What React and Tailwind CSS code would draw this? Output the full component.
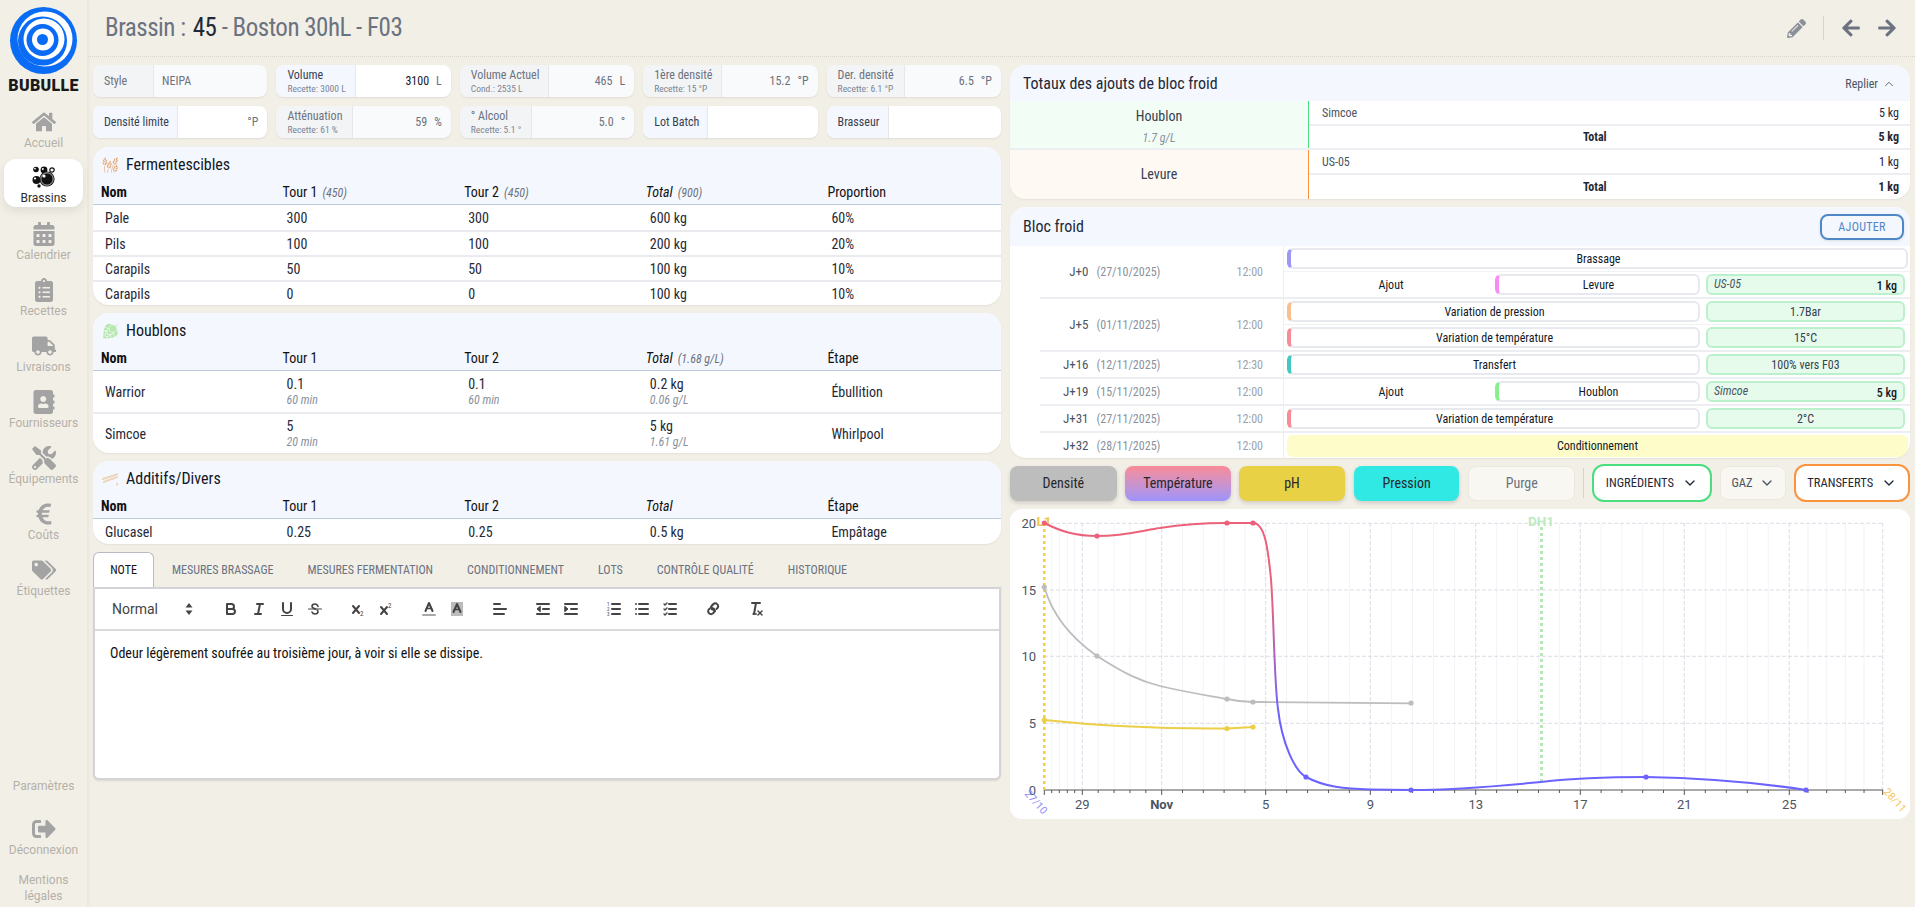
import React from 'react';
import { FaHome, FaCalendarAlt, FaClipboardList, FaTruck, FaAddressBook, FaTools, FaEuroSign, FaTags, FaSignOutAlt, FaPencilAlt, FaArrowLeft, FaArrowRight } from 'react-icons/fa';
import { GiWheat, GiHops } from 'react-icons/gi';
import { ChevronUp, ChevronDown } from 'lucide-react';

const Logo = () => (
  <svg width="70" height="70" viewBox="0 0 70 70">
    <circle cx="34.5" cy="34.5" r="33.5" fill="#0a6cf5" />
    <circle cx="36" cy="33" r="27.5" fill="#fff" />
    <circle cx="33.5" cy="35" r="24.5" fill="#0a6cf5" />
    <circle cx="35" cy="33" r="20.5" fill="#fff" />
    <circle cx="33.5" cy="34" r="16" fill="#0a6cf5" />
    <circle cx="34" cy="33.5" r="11" fill="#fff" />
    <circle cx="33.5" cy="33.5" r="5.5" fill="#0a6cf5" />
  </svg>
);

const BubblesIcon = () => (
  <svg width="24" height="22" viewBox="0 0 24 22">
    <circle cx="4" cy="3.5" r="2.8" fill="#111" />
    <circle cx="3" cy="2.6" r="0.9" fill="#fff" />
    <circle cx="12" cy="4" r="3.4" fill="#111" />
    <circle cx="10.8" cy="3" r="1" fill="#fff" />
    <circle cx="15" cy="13" r="7.6" fill="#111" />
    <circle cx="15" cy="13" r="6.2" fill="none" stroke="#fff" strokeWidth="0.7" />
    <circle cx="12" cy="10" r="1.6" fill="#fff" />
    <circle cx="4.5" cy="14" r="4" fill="#111" />
    <circle cx="3" cy="12.5" r="1.1" fill="#fff" />
    <circle cx="7" cy="20" r="1.7" fill="#111" />
    <circle cx="20" cy="4" r="2.2" fill="none" stroke="#111" strokeWidth="1.2" />
  </svg>
);

const SpoonIcon = () => (
  <svg width="18" height="14" viewBox="0 0 18 14" fill="none" stroke="#ecd4b4" strokeWidth="2" strokeLinecap="round">
    <path d="M1 7 L16 2" />
    <path d="M2 10 L16 5" />
    <path d="M16 12 L16 13" />
  </svg>
);

const navItems = [
  { label: 'Calendrier', Icon: FaCalendarAlt },
  { label: 'Recettes', Icon: FaClipboardList },
  { label: 'Livraisons', Icon: FaTruck },
  { label: 'Fournisseurs', Icon: FaAddressBook },
  { label: 'Équipements', Icon: FaTools },
  { label: 'Coûts', Icon: FaEuroSign },
  { label: 'Étiquettes', Icon: FaTags },
];

const NavItem = ({ label, Icon }) => (
  <div className="h-[56px] pb-[2px] flex flex-col items-center justify-center">
    <Icon className="text-[#a3a3a3] text-[24px]" />
    <span className="mt-[1px] text-[12px] leading-[16px] text-[#b5b1a9]">{label}</span>
  </div>
);

const Sidebar = () => (
  <aside className="w-[88px] shrink-0 h-screen flex flex-col border-r border-[#ebe8df] bg-[#f2efe7] [font-family:Roboto,sans-serif] [font-stretch:100%] shadow-[1px_0_3px_rgba(0,0,0,0.04)]">
    <div className="h-[103px] pt-[6px] flex flex-col items-center">
      <Logo />
      <span className="mt-[1px] text-[16px] leading-[18px] font-black tracking-[0.3px] text-[#1a1a1a]">BUBULLE</span>
    </div>
    <NavItem label="Accueil" Icon={FaHome} />
    <div className="mx-[4px] h-[48px] pt-[6px] rounded-xl bg-white shadow-[0_4px_10px_rgba(0,0,0,0.08)] flex flex-col items-center justify-center">
      <BubblesIcon />
      <span className="mt-[2px] text-[12px] leading-[16px] text-[#2b2b2b]">Brassins</span>
    </div>
    <div className="h-[8px]" />
    {navItems.map((item) => (
      <NavItem key={item.label} {...item} />
    ))}
    <div className="mt-auto flex flex-col items-center pb-[3px] text-[12px] leading-[16px] text-[#b5b1a9]">
      <span>Paramètres</span>
      <FaSignOutAlt className="mt-[23px] text-[#a3a3a3] text-[24px]" />
      <span className="mt-[1px]">Déconnexion</span>
      <span className="mt-[14px]">Mentions</span>
      <span>légales</span>
    </div>
  </aside>
);

const Field = ({ label, sub, value, unit, labelW, active }) => (
  <div className={`h-[32px] flex rounded-lg overflow-hidden shadow-[0_1px_2px_rgba(0,0,0,0.08)] ${active ? 'bg-white' : 'bg-[#f9fafb]'}`}>
    <div className={`${labelW} shrink-0 flex flex-col justify-center pl-[11px] border-r border-[#e5e7eb] ${active ? 'bg-[#f4f7fe] text-[#374151]' : 'bg-[#f3f4f6] text-[#6b7280]'}`}>
      <span className="text-[12px] leading-[15px]">{label}</span>
      {sub && <span className="text-[9.5px] leading-[12px] text-[#7b8494]">{sub}</span>}
    </div>
    <div className={`flex-1 flex items-center text-[12px] ${unit !== undefined ? 'justify-end pr-[9px]' : 'pl-[8px]'} ${active ? 'text-[#111827]' : 'text-[#6b7280]'}`}>
      <span>{value}</span>
      {unit && <span className="ml-[7px] text-[#6b7280]">{unit}</span>}
    </div>
  </div>
);

const fields = [
  { label: 'Style', value: 'NEIPA', labelW: 'w-[61px]' },
  { label: 'Volume', sub: 'Recette: 3000 L', value: '3100', unit: 'L', labelW: 'w-[80px]', active: true },
  { label: 'Volume Actuel', sub: 'Cond.: 2535 L', value: '465', unit: 'L', labelW: 'w-[89px]' },
  { label: '1ère densité', sub: 'Recette: 15 °P', value: '15.2', unit: '°P', labelW: 'w-[79px]' },
  { label: 'Der. densité', sub: 'Recette: 6.1 °P', value: '6.5', unit: '°P', labelW: 'w-[78px]' },
  { label: 'Densité limite', value: '', unit: '°P', labelW: 'w-[85px]', active: true },
  { label: 'Atténuation', sub: 'Recette: 61 %', value: '59', unit: '%', labelW: 'w-[77px]' },
  { label: '° Alcool', sub: 'Recette: 5.1 °', value: '5.0', unit: '°', labelW: 'w-[72px]' },
  { label: 'Lot Batch', value: '', labelW: 'w-[65px]', active: true },
  { label: 'Brasseur', value: '', labelW: 'w-[62px]', active: true },
];

const Head = ({ children, note, italic, first }) => (
  <div className={`pl-[8px] ${first ? 'font-bold' : ''} ${italic ? 'italic' : ''}`}>
    {children}
    {note && <span className="ml-[5px] text-[12px] italic text-[#6b7280]">{note}</span>}
  </div>
);

const IngredientCard = ({ icon, title, heads, rows, rowH }) => (
  <section className="rounded-2xl overflow-hidden bg-white shadow-[0_1px_2px_rgba(0,0,0,0.06)]">
    <div className="bg-[#f4f7fe] border-b border-[#bccbdc]">
      <div className="h-[33px] pt-[2px] flex items-center pl-[9px] gap-[7px] text-[16px] text-[#111827]">
        <span className="w-[17px] flex justify-center">{icon}</span>
        {title}
      </div>
      <div className="h-[24px] grid grid-cols-5 items-center text-[14px] text-[#111]">
        {heads.map((h, i) => (
          <Head key={i} first={i === 0} note={h.note} italic={h.italic}>{h.text}</Head>
        ))}
      </div>
    </div>
    {rows.map((row, i) => (
      <div key={i} className={`${rowH} pt-[1px] grid grid-cols-5 items-center text-[14px] text-[#1f2937] ${i > 0 ? 'border-t-2 border-[#e9ebef]' : ''}`}>
        {row.map((cell, j) => (
          <div key={j} className="pl-[12px]">
            {typeof cell === 'string' ? cell : (
              <div className="leading-[16px]">
                <div>{cell.v}</div>
                <div className="text-[12px] italic text-[#8a919c]">{cell.s}</div>
              </div>
            )}
          </div>
        ))}
      </div>
    ))}
  </section>
);

const Ico = ({ children }) => (
  <span className="w-[28px] h-[24px] flex items-center justify-center">
    <svg width="18" height="18" viewBox="0 0 18 18" fill="none" stroke="#444" strokeWidth="2" strokeLinecap="round" strokeLinejoin="round">
      {children}
    </svg>
  </span>
);

const Toolbar = () => (
  <div className="h-[42px] flex items-center pl-[9px] border-b-2 border-[#d9d9dc]">
    <div className="w-[98px] mr-[15px] flex items-center justify-between pl-[8px] pr-[8px] text-[14px] text-[#444] [font-stretch:100%]">
      <span>Normal</span>
      <svg width="10" height="16" viewBox="0 0 10 16" fill="#444"><path d="M5 2 L8.5 6.5 H1.5 Z" /><path d="M5 14 L8.5 9.5 H1.5 Z" /></svg>
    </div>
    <div className="flex mr-[15px]">
      <Ico><path d="M5 4h4.5a2.5 2.5 0 0 1 0 5H5z" /><path d="M5 9h5.5a2.5 2.5 0 0 1 0 5H5z" /></Ico>
      <Ico><line x1="7" x2="13" y1="4" y2="4" /><line x1="5" x2="11" y1="14" y2="14" /><line x1="8" x2="10" y1="14" y2="4" /></Ico>
      <Ico><path d="M5 3v6a4 4 0 0 0 8 0V3" /><line x1="3.5" x2="14.5" y1="15.5" y2="15.5" strokeWidth="1" /></Ico>
      <Ico><line x1="15.5" x2="2.5" y1="9" y2="9" strokeWidth="1" /><path d="M12 6.4C11.6 5 10.4 4 9 4 7.2 4 6 5 6 6.3 6 8 8 8.5 9.5 9" strokeWidth="1.6" /><path d="M6 12c.4 1.3 1.6 2 3 2 1.8 0 3-.9 3-2.2 0-.8-.3-1.3-.9-1.8" strokeWidth="1.6" /></Ico>
    </div>
    <div className="flex mr-[15px]">
      <Ico><path d="M4 6l6 7M10 6l-6 7" /><text x="11" y="16" fontSize="7" fill="#444" stroke="none">2</text></Ico>
      <Ico><path d="M4 7l6 7M10 7l-6 7" /><text x="11" y="8" fontSize="7" fill="#444" stroke="none">2</text></Ico>
    </div>
    <div className="flex mr-[15px]">
      <Ico><path d="M5.5 11 9 3l3.5 8" /><line x1="6.5" x2="11.5" y1="8.5" y2="8.5" strokeWidth="1.5" /><line x1="3" x2="15" y1="15" y2="15" stroke="#a8a8a8" strokeWidth="2" /></Ico>
      <Ico><rect x="3" y="2" width="12" height="14" fill="#bbb" stroke="none" /><path d="M5.5 12 9 4l3.5 8" /><line x1="6.5" x2="11.5" y1="9.5" y2="9.5" strokeWidth="1.5" /></Ico>
    </div>
    <div className="flex mr-[15px]">
      <Ico><line x1="3" x2="15" y1="9" y2="9" /><line x1="3" x2="13" y1="14" y2="14" /><line x1="3" x2="9" y1="4" y2="4" /></Ico>
    </div>
    <div className="flex mr-[15px]">
      <Ico><line x1="3" x2="15" y1="14" y2="14" /><line x1="3" x2="15" y1="4" y2="4" /><line x1="9" x2="15" y1="9" y2="9" /><path d="M6 6.5 3 9l3 2.5z" fill="#444" strokeWidth="1" /></Ico>
      <Ico><line x1="3" x2="15" y1="14" y2="14" /><line x1="3" x2="15" y1="4" y2="4" /><line x1="9" x2="15" y1="9" y2="9" /><path d="M3 6.5 6 9l-3 2.5z" fill="#444" strokeWidth="1" /></Ico>
    </div>
    <div className="flex mr-[15px]">
      <Ico><line x1="7" x2="15" y1="4" y2="4" /><line x1="7" x2="15" y1="9" y2="9" /><line x1="7" x2="15" y1="14" y2="14" /><text x="2" y="6" fontSize="5" fill="#444" stroke="none">1</text><text x="2" y="11" fontSize="5" fill="#444" stroke="none">2</text><text x="2" y="16" fontSize="5" fill="#444" stroke="none">3</text></Ico>
      <Ico><line x1="6" x2="15" y1="4" y2="4" /><line x1="6" x2="15" y1="9" y2="9" /><line x1="6" x2="15" y1="14" y2="14" /><line x1="3" x2="3" y1="4" y2="4" /><line x1="3" x2="3" y1="9" y2="9" /><line x1="3" x2="3" y1="14" y2="14" /></Ico>
      <Ico><line x1="8" x2="15" y1="4" y2="4" /><line x1="8" x2="15" y1="9" y2="9" /><line x1="8" x2="15" y1="14" y2="14" /><path d="M3 4l1 1 2-2M3 14l1 1 2-2" strokeWidth="1.4" /><path d="M3 9l1 1 2-2" strokeWidth="1.4" /></Ico>
    </div>
    <div className="flex mr-[15px]">
      <Ico><path d="M7 7 11 11" /><path d="M8.9 4.6 8 5.5a2.6 2.6 0 0 0 0 3.7l.3.3" /><path d="M9.5 8.5l.3.3a2.6 2.6 0 0 1 0 3.7l-.9.9a2.6 2.6 0 0 1-3.7 0l-.3-.3a2.6 2.6 0 0 1 0-3.7l.9-.9" /><path d="M8.5 5l.9-.9a2.6 2.6 0 0 1 3.7 0l.3.3a2.6 2.6 0 0 1 0 3.7l-.9.9" /></Ico>
    </div>
    <div className="flex">
      <Ico><line x1="5" x2="13" y1="3" y2="3" /><line x1="6" x2="9.4" y1="14" y2="14" strokeWidth="1.5" /><line x1="9" x2="7" y1="3" y2="14" /><line x1="11" x2="15" y1="11" y2="15" strokeWidth="1.5" /><line x1="15" x2="11" y1="11" y2="15" strokeWidth="1.5" /></Ico>
    </div>
  </div>
);

const tabs = ['MESURES BRASSAGE', 'MESURES FERMENTATION', 'CONDITIONNEMENT', 'LOTS', 'CONTRÔLE QUALITÉ', 'HISTORIQUE'];

const NotePanel = () => (
  <div>
    <div className="flex items-end h-[35px]">
      <div className="w-[61px] h-[35px] mr-[1px] flex items-center justify-center rounded-t-md border border-b-0 border-[#b8bcc2] bg-white text-[12px] text-[#111]">NOTE</div>
      {tabs.map((t) => (
        <div key={t} className="h-[35px] px-[17px] flex items-center text-[12px] text-[#6b7280]">{t}</div>
      ))}
    </div>
    <div className="h-[193px] bg-white border-2 border-[#d4d4d8] rounded-b-md shadow-[0_1px_2px_rgba(0,0,0,0.1)]">
      <Toolbar />
      <p className="pt-[12px] pl-[15px] text-[14px] leading-[20px] text-[#111]">Odeur légèrement soufrée au troisième jour, à voir si elle se dissipe.</p>
    </div>
  </div>
);

const TotalRows = ({ name, qty, tall }) => (
  <div className="flex-1">
    <div className="h-[25px] flex items-center justify-between pl-[13px] pr-[11px] text-[12px] text-[#4b5563] border-b-2 border-[#eceef2]">
      <span>{name}</span>
      <span className="text-[#1f2937]">{qty}</span>
    </div>
    <div className={`${tall} grid grid-cols-[1fr_auto] items-center pr-[11px] text-[12px] font-bold text-[#1f2937]`}>
      <span className="text-center pl-[2px]">Total</span>
      <span>{qty}</span>
    </div>
  </div>
);

const TotalsCard = () => (
  <section className="rounded-2xl overflow-hidden bg-white shadow-[0_1px_2px_rgba(0,0,0,0.06)]">
    <div className="h-[36px] pt-[2px] flex items-center justify-between pl-[13px] pr-[14px] bg-[#f4f7fe]">
      <span className="text-[16px] text-[#1f2937]">Totaux des ajouts de bloc froid</span>
      <span className="flex items-center gap-[4px] text-[12px] text-[#4b5563]">Replier <ChevronUp size={14} strokeWidth={1.5} /></span>
    </div>
    <div className="flex border-b-2 border-[#eceef2]">
      <div className="w-[299px] h-[47px] pt-[3px] bg-[#f2fdf5] border-r border-[#4ade80] flex flex-col items-center justify-center">
        <span className="text-[14px] text-[#374151]">Houblon</span>
        <span className="mt-[2px] text-[12px] italic text-[#8a919c]">1.7 g/L</span>
      </div>
      <TotalRows name="Simcoe" qty="5 kg" tall="h-[22px]" />
    </div>
    <div className="flex">
      <div className="w-[299px] h-[49px] bg-[#fff9f3] border-r border-[#fb923c] flex items-center justify-center text-[14px] text-[#374151]">Levure</div>
      <TotalRows name="US-05" qty="1 kg" tall="h-[24px]" />
    </div>
  </section>
);

const Bubble = ({ color, children, className }) => (
  <div className={`h-[21px] flex items-center justify-center rounded-md border-2 border-[#e8e9ee] border-l-4 bg-white text-[12px] text-[#111827] ${color} ${className}`}>{children}</div>
);

const GreenBox = ({ children, name, qty }) => (
  <div className="w-[199px] h-[21px] mr-[3px] shrink-0 flex items-center justify-center relative rounded-md border-2 border-[#bbf0cc] bg-[#e6fbec] text-[12px] text-[#374151]">
    {name ? (
      <>
        <span className="absolute left-[6px] top-[-1px] italic text-[#4b5563]">{name}</span>
        <span className="absolute right-[6px] bottom-[-2px] font-medium text-[#111827]">{qty}</span>
      </>
    ) : children}
  </div>
);

const EventRow = ({ ev }) => (
  <div className="h-[25px] flex items-center gap-[6px] pl-[3px] pr-[2px]">
    {ev.yellow ? (
      <div className="flex-1 h-[22px] flex items-center justify-center rounded-md bg-[#fefcc8] text-[12px] text-[#111827]">{ev.text}</div>
    ) : ev.full ? (
      <Bubble color={ev.color} className="flex-1">{ev.text}</Bubble>
    ) : ev.prefix ? (
      <>
        <span className="w-[208px] text-center text-[12px] text-[#111827]">{ev.prefix}</span>
        <Bubble color={ev.color} className="flex-1 -ml-[6px]">{ev.text}</Bubble>
        <GreenBox name={ev.name} qty={ev.qty} />
      </>
    ) : (
      <>
        <Bubble color={ev.color} className="flex-1">{ev.text}</Bubble>
        <GreenBox>{ev.value}</GreenBox>
      </>
    )}
  </div>
);

const schedule = [
  { day: 'J+0', date: '(27/10/2025)', time: '12:00', events: [
    { full: true, text: 'Brassage', color: 'border-l-[#9d97f8]' },
    { prefix: 'Ajout', text: 'Levure', color: 'border-l-[#f98bf5]', name: 'US-05', qty: '1 kg' },
  ] },
  { day: 'J+5', date: '(01/11/2025)', time: '12:00', events: [
    { text: 'Variation de pression', color: 'border-l-[#f9c08e]', value: '1.7Bar' },
    { text: 'Variation de température', color: 'border-l-[#f78b96]', value: '15°C' },
  ] },
  { day: 'J+16', date: '(12/11/2025)', time: '12:30', events: [
    { text: 'Transfert', color: 'border-l-[#3fc9c2]', value: '100% vers F03' },
  ] },
  { day: 'J+19', date: '(15/11/2025)', time: '12:00', events: [
    { prefix: 'Ajout', text: 'Houblon', color: 'border-l-[#86f08f]', name: 'Simcoe', qty: '5 kg' },
  ] },
  { day: 'J+31', date: '(27/11/2025)', time: '12:00', events: [
    { text: 'Variation de température', color: 'border-l-[#f78b96]', value: '2°C' },
  ] },
  { day: 'J+32', date: '(28/11/2025)', time: '12:00', events: [
    { yellow: true, text: 'Conditionnement' },
  ] },
];

const BlocFroid = () => (
  <section className="rounded-2xl overflow-hidden bg-white shadow-[0_1px_2px_rgba(0,0,0,0.06)]">
    <div className="h-[39px] flex items-center justify-between pl-[13px] pr-[6px] bg-[#f4f7fe]">
      <span className="text-[16px] text-[#1f2937]">Bloc froid</span>
      <span className="w-[84px] h-[26px] flex items-center justify-center rounded-lg border-2 border-[#4f87c7] text-[12px] tracking-[0.3px] text-[#4f87c7] shadow-[0_1px_3px_rgba(0,0,0,0.1)]">AJOUTER</span>
    </div>
    {schedule.map((row, i) => (
      <div key={row.day} className={`flex ${i > 0 ? 'border-t-2 border-[#eceef2] ml-[30px]' : ''}`}>
        <div className={`${i > 0 ? 'w-[244px]' : 'w-[274px]'} shrink-0 flex items-center justify-end border-r border-[#eceef2] pr-[20px] text-[13px]`}>
          <span className="text-[#4b5563]">{row.day}</span>
          <span className="ml-[8px] w-[62px] text-[12px] text-[#8a919c]">{row.date}</span>
          <span className="ml-[78px] text-[12px] text-[#9ca3af]">{row.time}</span>
        </div>
        <div className="flex-1">
          {row.events.map((ev, j) => (
            <div key={j} className={j > 0 ? 'border-t border-[#f1f2f5]' : ''}>
              <EventRow ev={ev} />
            </div>
          ))}
        </div>
      </div>
    ))}
  </section>
);

const ChartButton = ({ className, children }) => (
  <div className={`h-[35px] flex items-center justify-center rounded-lg text-[14px] shadow-[0_2px_4px_rgba(0,0,0,0.15)] ${className}`}>{children}</div>
);

const Controls = () => (
  <div className="h-[38px] -mt-[2px] flex items-center">
    <ChartButton className="w-[107px] mr-[8px] bg-[#bdbdbd] text-[#27272a]">Densité</ChartButton>
    <ChartButton className="w-[107px] mr-[8px] bg-gradient-to-b from-[#f98a96] to-[#9c93fb] text-[#27272a]">Température</ChartButton>
    <ChartButton className="w-[106px] mr-[9px] bg-[#e9d146] text-[#27272a]">pH</ChartButton>
    <ChartButton className="w-[106px] mr-[9px] bg-[#30e8e4] text-[#27272a]">Pression</ChartButton>
    <div className="w-[107px] h-[35px] flex items-center justify-center rounded-lg border border-[#ebe9e2] bg-[#f8f7f2] text-[14px] text-[#6b7280]">Purge</div>
    <div className="w-px h-[30px] mx-[8px] bg-[#d5d5d0]" />
    <div className="w-[120px] h-[38px] flex items-center justify-center gap-[8px] rounded-xl border-2 border-[#4ade80] bg-white text-[12.5px] text-[#1f2937]">INGRÉDIENTS <ChevronDown size={16} /></div>
    <div className="w-[67px] h-[34px] ml-[8px] flex items-center justify-center gap-[6px] rounded-lg border border-[#ebe9e2] bg-[#f8f7f2] text-[12.5px] text-[#4b5563]">GAZ <ChevronDown size={16} /></div>
    <div className="w-[116px] h-[38px] ml-[8px] flex items-center justify-center gap-[8px] rounded-xl border-2 border-[#fb923c] bg-white text-[12.5px] text-[#1f2937]">TRANSFERTS <ChevronDown size={16} /></div>
  </div>
);

// major ticks on the date axis, in card coordinates
const majors = [34.3, 72.3, 151.7, 255.7, 360.3, 465.7, 570.3, 674.3, 779.3, 872.7];
const minors = [];
majors.forEach((m, i) => {
  if (i === 0 || i === majors.length - 1) return;
  const next = majors[i + 1];
  for (let k = 1; k < 5; k++) minors.push(m + ((next - m) * k) / 5);
});
[41.7, 49.3, 57.3, 64.7].forEach((x) => minors.push(x));

const Dot = ({ x, y, c, r = 2.6 }) => <circle cx={x} cy={y} r={r} fill={c} />;

const Chart = () => (
  <div className="h-[310px] -mt-[1px] rounded-xl bg-white overflow-hidden">
    <svg width="900" height="310" viewBox="0 0 900 310" className="block [font-stretch:100%]">
      <defs>
        <linearGradient id="tempGrad" gradientUnits="userSpaceOnUse" x1="0" y1="85" x2="0" y2="205">
          <stop offset="0" stopColor="#ec6179" />
          <stop offset="1" stopColor="#6c63ff" />
        </linearGradient>
      </defs>
      {minors.map((x) => (
        <g key={x}>
          <line x1={x} x2={x} y1="14" y2="281" stroke="#f3f3fa" />
          <line x1={x} x2={x} y1="281" y2="284" stroke="#555" />
        </g>
      ))}
      {[14.3, 81, 147.3, 214.3].map((y) => (
        <line key={y} x1="34" x2="872.7" y1={y} y2={y} stroke="#dcdce6" strokeDasharray="4 2" />
      ))}
      {majors.slice(1).map((x) => (
        <g key={x}>
          <line x1={x} x2={x} y1="14" y2="281" stroke="#dcdce6" strokeDasharray="4 2" />
          <line x1={x} x2={x} y1="281" y2="286" stroke="#555" />
        </g>
      ))}
      <line x1="34" x2="873" y1="281" y2="281" stroke="#555" />
      <line x1="34.3" x2="34.3" y1="281" y2="286" stroke="#555" />

      <line x1="531.5" x2="531.5" y1="18" y2="274" stroke="#b5e8b5" strokeWidth="3" strokeDasharray="3 3" />
      <line x1="34.3" x2="34.3" y1="14" y2="281" stroke="#f0ce45" strokeWidth="2.5" strokeDasharray="3 3" />
      <text x="531" y="17" textAnchor="middle" fontSize="13.5" fontWeight="700" fill="#bfeabf" fontFamily="Roboto">DH1</text>
      <text x="34" y="17" textAnchor="middle" fontSize="13.5" fontWeight="700" fill="#edc94a" fontFamily="Roboto">L1</text>

      <path d="M34.3 78 C42 105 60 128 87 147 C115 165 130 172 150 177 C175 183 195 186 217 190 C226 192 232 193 243 193 L401 194.3" fill="none" stroke="#bdbdbd" strokeWidth="1.8" />
      <path d="M34.3 211 C90 217 160 220 217 219.5 L243 218" fill="none" stroke="#ecce47" strokeWidth="2" />
      <path d="M34.3 14 C50 22 65 27 87 27 C115 27 135 21 150 19 C175 15 195 14 217 14 L243 14 C255 14 258 40 261 70 C264 110 264 170 268 200 C272 235 285 262 296 268 C315 278 335 280 360 280.5 L401 281 C440 281 490 277 531 273 C565 269 600 268 636 268 C690 269 750 274 796 281" fill="none" stroke="url(#tempGrad)" strokeWidth="2" />

      {[[34.3, 78], [87, 147], [217, 190], [243, 193], [401, 194]].map(([x, y]) => <Dot key={x} x={x} y={y} c="#bdbdbd" />)}
      {[[34.3, 211], [217, 219.5], [243, 218]].map(([x, y]) => <Dot key={x} x={x} y={y} c="#ecce47" />)}
      {[[34.3, 14], [87, 27], [217, 14], [243, 14]].map(([x, y]) => <Dot key={x} x={x} y={y} c="#ec6179" />)}
      {[[296, 268], [401, 281], [636, 268], [796, 281]].map(([x, y]) => <Dot key={x} x={x} y={y} c="#6c63ff" />)}

      {[['20', 19], ['15', 85.5], ['10', 152], ['5', 219], ['0', 285.5]].map(([t, y]) => (
        <text key={t} x="26" y={y} textAnchor="end" fontSize="13" fill="#4b5563" fontFamily="Roboto">{t}</text>
      ))}
      {[['29', 72.3], ['5', 255.7], ['9', 360.3], ['13', 465.7], ['17', 570.3], ['21', 674.3], ['25', 779.3]].map(([t, x]) => (
        <text key={t} x={x} y="300" textAnchor="middle" fontSize="13" fill="#4b5563" fontFamily="Roboto">{t}</text>
      ))}
      <text x="151.7" y="300" textAnchor="middle" fontSize="13" fontWeight="700" fill="#4b5563" fontFamily="Roboto">Nov</text>
      <text transform="translate(14 285) rotate(48)" fontSize="10.5" fill="#8f8cf8" fontFamily="Roboto">27/10</text>
      <text transform="translate(873 283) rotate(48)" fontSize="10.5" fill="#f7c55a" fontFamily="Roboto">28/11</text>
    </svg>
  </div>
);

const fermentHeads = [
  { text: 'Nom' },
  { text: 'Tour 1', note: '(450)' },
  { text: 'Tour 2', note: '(450)' },
  { text: 'Total', note: '(900)', italic: true },
  { text: 'Proportion' },
];

const App = () => (
  <div className="w-screen h-screen flex overflow-hidden bg-[#f2efe7] [font-family:Roboto,'Liberation_Sans_Narrow',sans-serif] [font-stretch:75%]">
    <Sidebar />
    <main className="flex-1 min-w-0">
      <header className="h-[57px] flex items-center justify-between pl-[17px] pr-[18px] border-b border-dotted border-[#d8d5cc]">
        <h1 className="text-[25px] tracking-[-0.5px] text-[#6b7280]">Brassin : <span className="ml-[2px] text-[#1f2937]">45</span> - Boston 30hL - F03</h1>
        <div className="flex items-center text-[#6b7280]">
          <FaPencilAlt className="text-[19px] text-[#8b8f98]" />
          <div className="w-px h-[24px] mx-[17px] bg-[#d5d5d0]" />
          <FaArrowLeft className="text-[20px]" />
          <FaArrowRight className="ml-[16px] text-[20px]" />
        </div>
      </header>
      <div className="flex gap-[9px] pl-[5px] pr-[5px] pt-[8px]">
        <div className="w-[908px] shrink-0 flex flex-col gap-[8px]">
          <div className="grid grid-cols-5 gap-x-[9px] gap-y-[9px] mb-[1px]">
            {fields.map((f) => <Field key={f.label} {...f} />)}
          </div>
          <IngredientCard
            icon={<GiWheat className="text-[18px] text-[#e5a877]" />}
            title="Fermentescibles"
            heads={fermentHeads}
            rowH="h-[25px]"
            rows={[
              ['Pale', '300', '300', '600 kg', '60%'],
              ['Pils', '100', '100', '200 kg', '20%'],
              ['Carapils', '50', '50', '100 kg', '10%'],
              ['Carapils', '0', '0', '100 kg', '10%'],
            ]}
          />
          <IngredientCard
            icon={<GiHops className="text-[18px] text-[#b6e8b0]" />}
            title="Houblons"
            heads={[{ text: 'Nom' }, { text: 'Tour 1' }, { text: 'Tour 2' }, { text: 'Total', note: '(1.68 g/L)', italic: true }, { text: 'Étape' }]}
            rowH="h-[41px]"
            rows={[
              ['Warrior', { v: '0.1', s: '60 min' }, { v: '0.1', s: '60 min' }, { v: '0.2 kg', s: '0.06 g/L' }, 'Ébullition'],
              ['Simcoe', { v: '5', s: '20 min' }, '', { v: '5 kg', s: '1.61 g/L' }, 'Whirlpool'],
            ]}
          />
          <IngredientCard
            icon={<SpoonIcon />}
            title="Additifs/Divers"
            heads={[{ text: 'Nom' }, { text: 'Tour 1' }, { text: 'Tour 2' }, { text: 'Total', italic: true }, { text: 'Étape' }]}
            rowH="h-[25px]"
            rows={[['Glucasel', '0.25', '0.25', '0.5 kg', 'Empâtage']]}
          />
          <NotePanel />
        </div>
        <div className="w-[900px] shrink-0 flex flex-col gap-[8px]">
          <TotalsCard />
          <BlocFroid />
          <Controls />
          <Chart />
        </div>
      </div>
    </main>
  </div>
);

export default App;
